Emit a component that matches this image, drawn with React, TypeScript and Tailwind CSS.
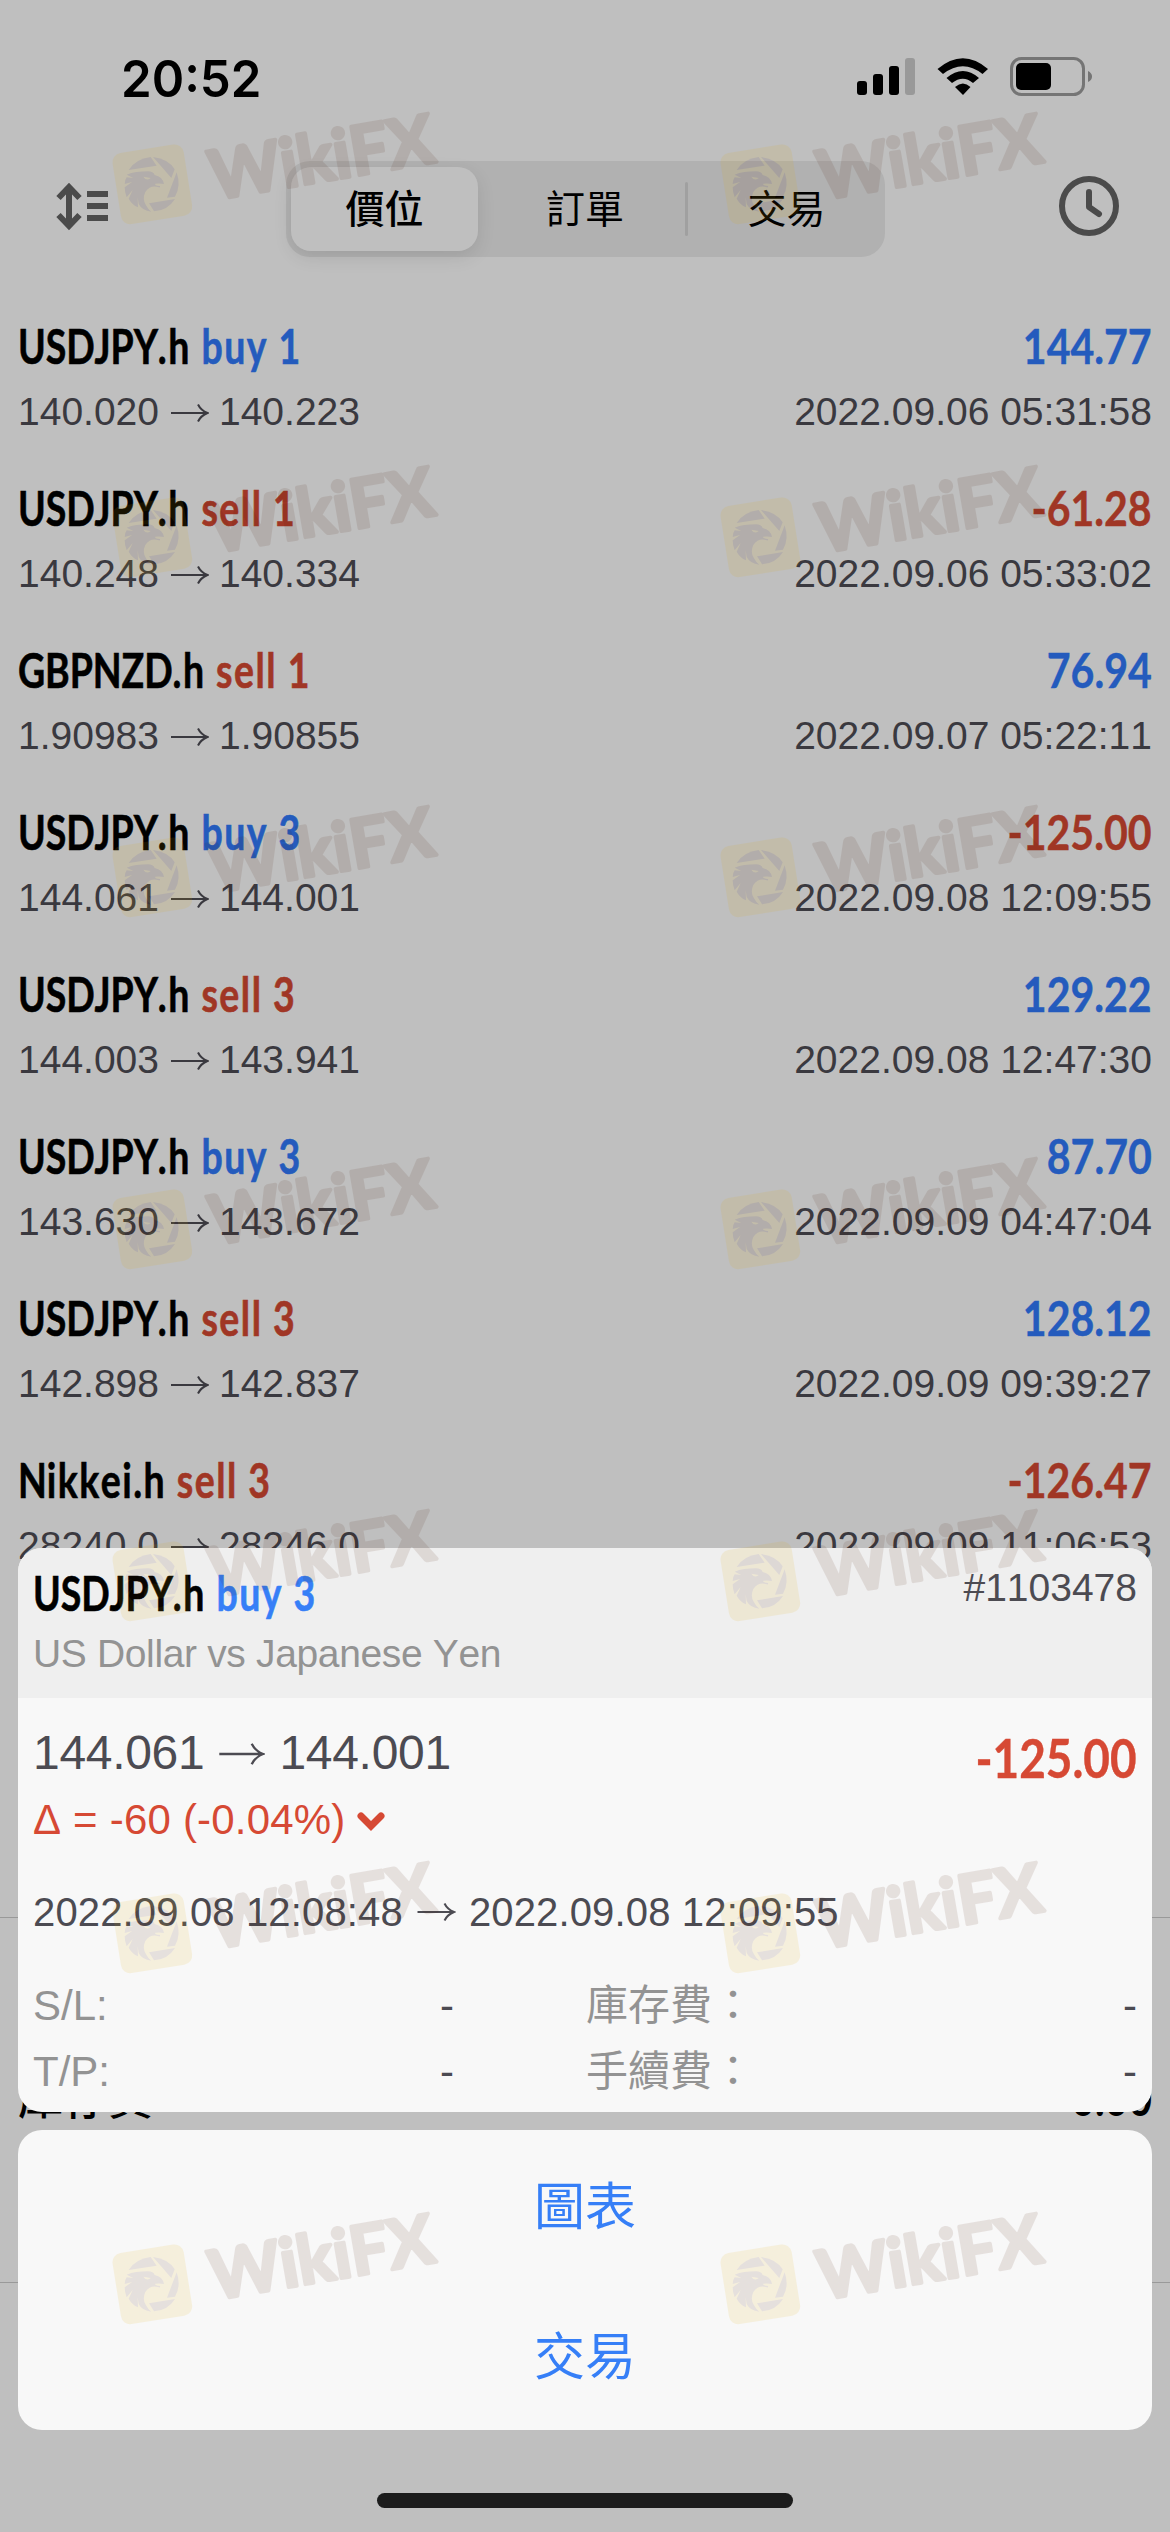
import React from 'react';

interface Deal {
  symbol: string;
  side: 'buy' | 'sell';
  volume: number;
  open: string;
  close: string;
  profit: string;
  time: string;
}

const deals: Deal[] = [
  { symbol: 'USDJPY.h', side: 'buy', volume: 1, open: '140.020', close: '140.223', profit: '144.77', time: '2022.09.06 05:31:58' },
  { symbol: 'USDJPY.h', side: 'sell', volume: 1, open: '140.248', close: '140.334', profit: '-61.28', time: '2022.09.06 05:33:02' },
  { symbol: 'GBPNZD.h', side: 'sell', volume: 1, open: '1.90983', close: '1.90855', profit: '76.94', time: '2022.09.07 05:22:11' },
  { symbol: 'USDJPY.h', side: 'buy', volume: 3, open: '144.061', close: '144.001', profit: '-125.00', time: '2022.09.08 12:09:55' },
  { symbol: 'USDJPY.h', side: 'sell', volume: 3, open: '144.003', close: '143.941', profit: '129.22', time: '2022.09.08 12:47:30' },
  { symbol: 'USDJPY.h', side: 'buy', volume: 3, open: '143.630', close: '143.672', profit: '87.70', time: '2022.09.09 04:47:04' },
  { symbol: 'USDJPY.h', side: 'sell', volume: 3, open: '142.898', close: '142.837', profit: '128.12', time: '2022.09.09 09:39:27' },
  { symbol: 'Nikkei.h', side: 'sell', volume: 3, open: '28240.0', close: '28246.0', profit: '-126.47', time: '2022.09.09 11:06:53' },
];

const watermarkRows = [105, 458, 798, 1150, 1502, 1854, 2205];
const watermarkCols = [107, 715];

const Arrow: React.FC<{ className: string }> = ({ className }) => (
  <svg viewBox="0 0 39 20" className={className} fill="none" stroke="currentColor" strokeWidth="2">
    <path d="M1 10H37M28 1.5Q31 7.500 37.500 10Q31 12.500 28 18.500" />
  </svg>
);

// Condensed heading, lowercase letters are spaced a little wider than the capitals
const DealTitle: React.FC<{ symbol: string; side: string; volume: number; sideColor: string }> = ({
  symbol,
  side,
  volume,
  sideColor,
}) => {
  const caps = symbol.match(/^[A-Z]+/)?.[0] ?? '';
  return (
    <div className="origin-left scale-x-[0.78] whitespace-nowrap font-[Lato,sans-serif] text-[48px] font-bold leading-[72px] tracking-[1.9px] text-black [-webkit-text-stroke:0.6px]">
      <span className="tracking-[-0.1px]">{caps}</span>
      {symbol.slice(caps.length)}{' '}
      <span className={sideColor}>
        {side} {volume}
      </span>
    </div>
  );
};

const StatusBar = () => (
  <div className="flex h-[144px] items-start justify-between pl-[121px] pr-[78px] pt-[56px]">
    <span className="inline-block origin-left scale-x-[0.965] whitespace-nowrap font-[Inter,sans-serif] text-[51px] font-semibold leading-[45px] text-black">
      20:52
    </span>
    <svg viewBox="856 57 235 42" className="h-[42px] w-[235px]">
      <rect x="856" y="82" width="10" height="14" rx="3" />
      <rect x="872" y="75" width="10" height="21" rx="3" />
      <rect x="888" y="67" width="10" height="29" rx="3" />
      <rect x="904" y="59" width="10" height="37" rx="3" fill="#999999" />
      <path d="M936.500 70Q962 48.500 987 70L981.500 75Q962 59.500 942 75Z" />
      <path d="M945.500 79Q962 65 978 79L972 84Q962 75.500 951 84Z" />
      <path d="M954 88Q962 81 969.500 88L962 96Z" />
      <rect x="1010.500" y="59.500" width="72" height="36" rx="10" fill="none" stroke="#757575" strokeWidth="3" />
      <rect x="1015" y="64" width="35" height="27" rx="5" />
      <path d="M1087 72Q1091 74 1091 77.500Q1091 81 1087 83Z" fill="#757575" />
    </svg>
  </div>
);

const Toolbar = () => (
  <div className="flex h-[125px] items-start justify-between pl-[55px] pr-[49px] pt-[17px]">
    <svg viewBox="55 180 54 54" className="mt-[19px] h-[54px] w-[54px]" stroke="#4b4b4b" fill="none">
      <path d="M69 189V225" strokeWidth="6" />
      <path d="M58.500 198L69 187L79.500 198M58.500 215L69 226L79.500 215" strokeWidth="6" />
      <path d="M87 194H108M87 206H108M87 218H108" strokeWidth="6" />
    </svg>
    <div className="ml-[5px] flex h-[96px] w-[599px] items-center rounded-[24px] bg-[#b1b1b1] pl-[5px] text-[39px] text-black">
      <div className="flex h-[84px] w-[187px] items-center justify-center rounded-[20px] bg-[#bfbfbf] pt-[2px] font-medium shadow-[0_6px_18px_rgba(0,0,0,0.1)]">
        價位
      </div>
      <div className="flex h-[84px] w-[207px] items-center justify-center pl-[7px] pt-[2px]">訂單</div>
      <div className="h-[54px] w-[3px] rounded-full bg-[#a0a0a0]" />
      <div className="flex h-[84px] flex-1 items-center justify-center pt-[2px]">交易</div>
    </div>
    <svg viewBox="0 0 64 64" className="mt-[13px] h-[64px] w-[64px]" fill="none" stroke="#4b4b4b" strokeWidth="6" strokeLinecap="round" strokeLinejoin="round">
      <circle cx="32" cy="32" r="27" />
      <path d="M32 18V33L42 40" />
    </svg>
  </div>
);

const DealRow: React.FC<{ deal: Deal }> = ({ deal }) => (
  <div className="h-[162px] px-[18px]">
    <div className="flex justify-between">
      <DealTitle
        symbol={deal.symbol}
        side={deal.side}
        volume={deal.volume}
        sideColor={deal.side === 'buy' ? 'text-[#245bbd]' : 'text-[#a03625]'}
      />
      <div
        className={`origin-right scale-x-[0.855] font-[Lato,sans-serif] text-[48px] font-bold leading-[72px] [-webkit-text-stroke:0.4px] ${
          deal.profit.startsWith('-') ? 'text-[#a03625]' : 'text-[#245bbd]'
        }`}
      >
        {deal.profit}
      </div>
    </div>
    <div className="flex justify-between pt-[1px] text-[39px] leading-[58px] text-[#3a393f]">
      <div className="flex items-center">
        {deal.open}
        <Arrow className="ml-[11px] mr-[10px] mt-[1px] h-[20px] w-[39px]" />
        {deal.close}
      </div>
      <div>{deal.time}</div>
    </div>
  </div>
);

const DetailCard = () => (
  <div className="h-[564px] overflow-hidden rounded-[24px] bg-[#f8f8f8] text-[#4c4b52]">
    <div className="flex h-[150px] justify-between bg-[#efefef] px-[15px] pt-[9px]">
      <div>
        <DealTitle symbol="USDJPY.h" side="buy" volume={3} sideColor="text-[#367ff7]" />
        <div className="-mt-[3px] text-[39px] leading-[56px] tracking-[-0.35px] text-[#939393]">US Dollar vs Japanese Yen</div>
      </div>
      <div className="pt-[3px] text-[39px] leading-[56px]">#1103478</div>
    </div>
    <div className="flex justify-between px-[15px] pt-[20px]">
      <div>
        <div className="flex items-center text-[48px] leading-[70px] tracking-[-0.3px]">
          144.061
          <Arrow className="ml-[14px] mr-[14px] mt-[1px] h-[24px] w-[47px]" />
          144.001
        </div>
        <div className="flex items-center text-[42px] leading-[64px] tracking-[0.2px] text-[#d64934]">
          Δ = -60 (-0.04%)
          <svg viewBox="0 0 28 20" className="ml-[11px] mt-[2px] h-[20px] w-[28px]" fill="none" stroke="currentColor" strokeWidth="7" strokeLinecap="round">
            <path d="M4 5L14 15L24 5" />
          </svg>
        </div>
      </div>
      <div className="origin-right scale-x-[0.85] font-[Lato,sans-serif] text-[54px] font-bold leading-[80px] text-[#d64934] [-webkit-text-stroke:0.4px]">
        -125.00
      </div>
    </div>
    <div className="mt-[30px] flex items-center px-[15px] text-[40px] leading-[60px] tracking-[0.15px]">
      2022.09.08 12:08:48
      <Arrow className="mx-[13px] h-[20px] w-[40px]" />
      2022.09.08 12:09:55
    </div>
    <div className="mt-[31px] grid grid-cols-[421px_1fr] gap-x-[132px] px-[15px] text-[42px] leading-[66px]">
      <div className="flex justify-between">
        <span className="text-[#939393]">S/L:</span>
        <span>-</span>
      </div>
      <div className="flex justify-between">
        <span className="text-[#939393]">庫存費：</span>
        <span>-</span>
      </div>
      <div className="flex justify-between">
        <span className="text-[#939393]">T/P:</span>
        <span>-</span>
      </div>
      <div className="flex justify-between">
        <span className="text-[#939393]">手續費：</span>
        <span>-</span>
      </div>
    </div>
  </div>
);

const ActionCard = () => (
  <div className="mt-[18px] grid h-[300px] grid-rows-2 rounded-[24px] bg-[#f8f8f8] text-[51px] text-[#367ff7]">
    <button className="flex items-center justify-center pt-[7px]">圖表</button>
    <button className="flex items-center justify-center pt-[7px]">交易</button>
  </div>
);

const Watermark = () => (
  <svg viewBox="45 75 1005 375" className="h-[125px] w-[335px] overflow-visible opacity-[0.107]">
    <rect x="73" y="205" width="216" height="216" rx="28" fill="#e3ac00" transform="rotate(-9 181 313)" />
    <g fill="#501e0a">
      <path d="M110 270Q130 237 176 231L194 257Z" />
      <path d="M183 231Q230 237 248 268L238 294Z" />
      <path d="M254 277Q268 318 249 350L225 353Z" />
      <path d="M171 370L249 357Q227 392 186 394Z" />
      <path d="M104 284Q130 274 168 274Q184 274 188 285Q212 290 216 312Q204 309 190 311Q186 316 204 318Q206 323 200 322Q176 314 160 336Q150 358 162 376Q168 388 178 395Q150 392 140 372L137 352L138 382Q120 374 110 356L122 330L104 352Q98 338 98 322L120 306L98 312Q98 300 104 292L124 294Z" />
      <text
        x="365"
        y="360"
        transform="rotate(-9.700 365 360)"
        textLength="680"
        lengthAdjust="spacingAndGlyphs"
        fontFamily="Lato, sans-serif"
        fontWeight="700"
        fontSize="204"
        stroke="#501e0a"
        strokeWidth="11"
        strokeLinejoin="round"
      >
        WikiFX
      </text>
    </g>
    <path d="M154 290L176 294Q170 301 160 297Z" fill="#e3ac00" />
  </svg>
);

const App: React.FC = () => {
  return (
    <div className="relative h-[2532px] w-[1170px] overflow-hidden bg-[#bfbfbf] font-['Liberation_Sans','Noto_Sans_CJK_TC',sans-serif] [font-kerning:none]">
      <StatusBar />
      <Toolbar />

      {/* Deal history */}
      <div className="mt-[41px]">
        {deals.map((deal) => (
          <DealRow key={deal.time} deal={deal} />
        ))}
      </div>

      {/* Account summary, mostly behind the sheet */}
      <div className="mt-[311px] flex h-[366px] items-start justify-between border-y border-[#999999] px-[18px] pt-[150px] font-medium text-black">
        <span className="text-[45px] leading-[64px]">庫存費</span>
        <span className="origin-right scale-x-[0.85] font-[Lato,sans-serif] text-[48px] font-bold leading-[60px]">
          0.00
        </span>
      </div>

      {/* Bottom sheet */}
      <div className="absolute inset-x-[18px] top-[1548px]">
        <DetailCard />
        <ActionCard />
      </div>
      <div className="absolute bottom-[24px] left-[377px] h-[15px] w-[416px] rounded-full bg-[#1c1c1c]" />

      {/* Watermark overlay */}
      {watermarkRows.map((top) =>
        watermarkCols.map((left) => (
          <div key={`${top}-${left}`} className="pointer-events-none absolute" style={{ top, left }}>
            <Watermark />
          </div>
        ))
      )}
    </div>
  );
};

export default App;
